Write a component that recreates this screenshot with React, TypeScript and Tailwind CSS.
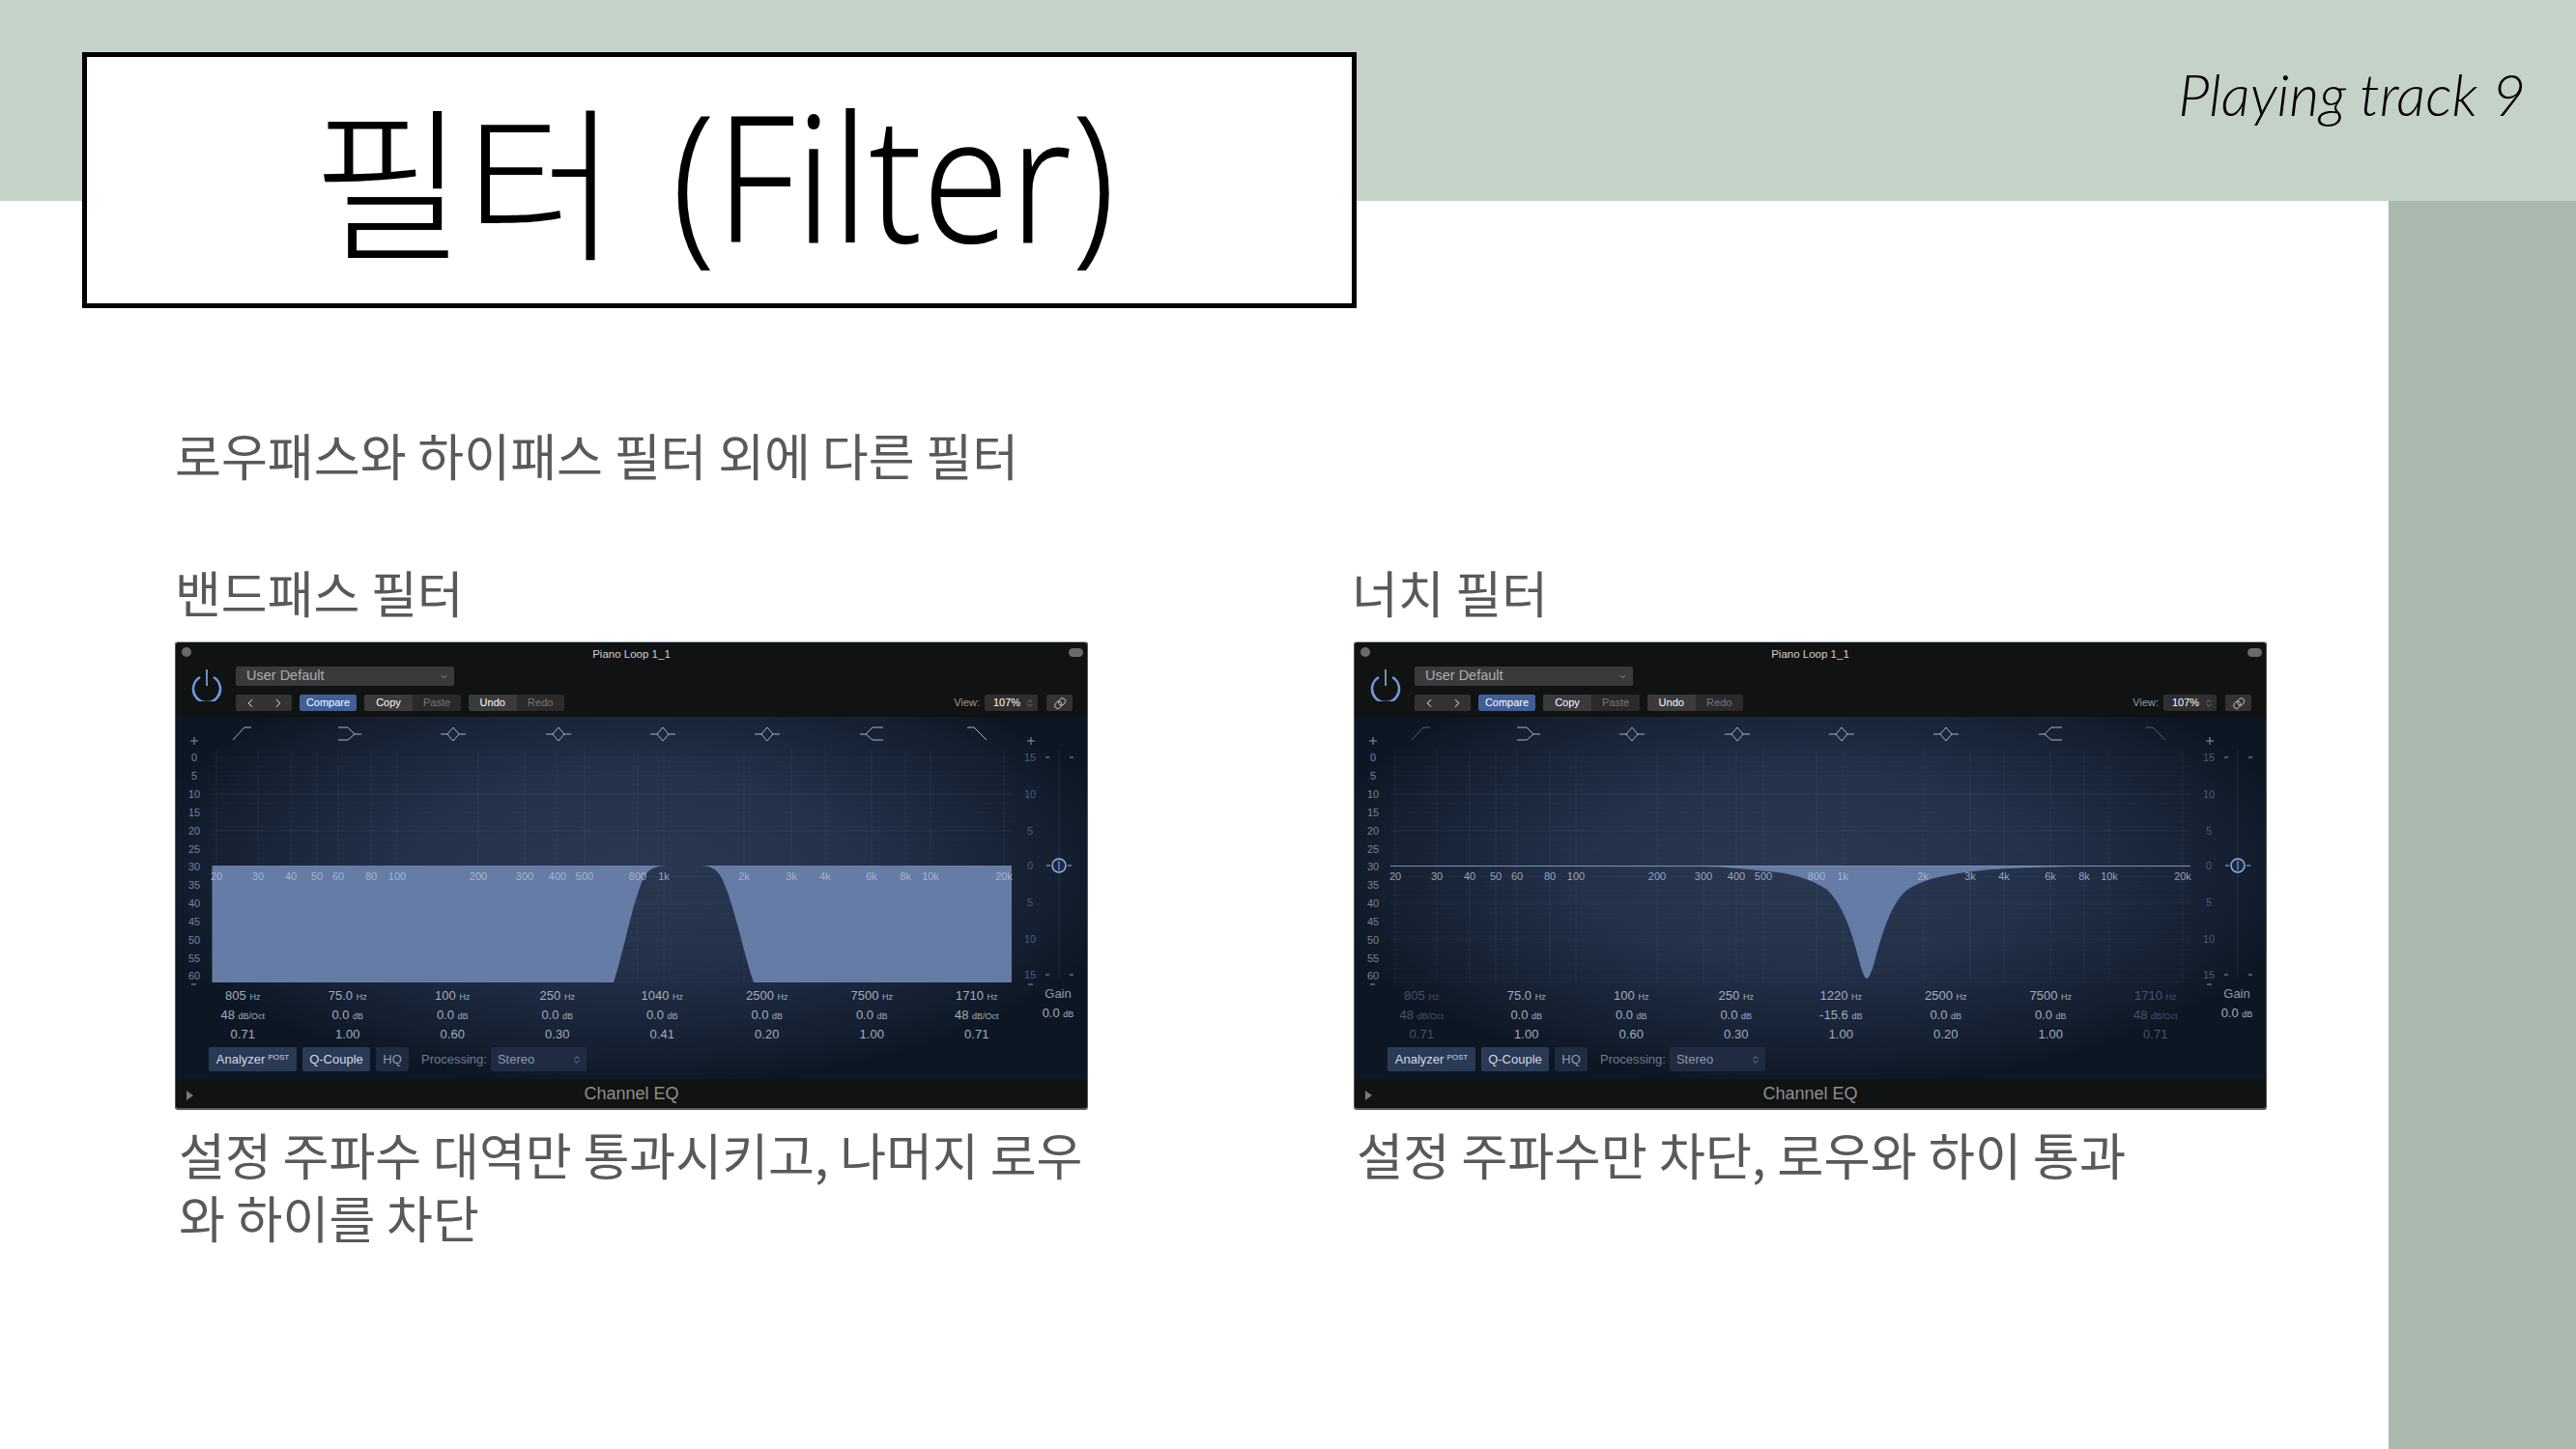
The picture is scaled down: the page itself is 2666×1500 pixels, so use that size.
import { ChevronLeft, ChevronRight, ChevronDown, ChevronsUpDown } from 'lucide-react'

type Band = { freq: string; unit: string; gain: string; gainUnit: string; q: string; dim?: boolean }

const freqLabels: [string, number][] = [
  ['20', 42], ['30', 85], ['40', 119], ['50', 146], ['60', 168], ['80', 202], ['100', 229],
  ['200', 313], ['300', 361], ['400', 395], ['500', 423], ['800', 478], ['1k', 505],
  ['2k', 588], ['3k', 637], ['4k', 672], ['6k', 720], ['8k', 755], ['10k', 781], ['20k', 857],
]
const leftDb: [string, number][] = [
  ['0', 120], ['5', 139], ['10', 158], ['15', 177], ['20', 196], ['25', 215], ['30', 233],
  ['35', 252], ['40', 271], ['45', 290], ['50', 309], ['55', 328], ['60', 346],
]
const rightDb: [string, number][] = [
  ['15', 120], ['10', 158], ['5', 196], ['0', 232], ['5', 270], ['10', 308], ['15', 345],
]
const bellCenters = [287, 396, 504, 612]

const bandPass: Band[] = [
  { freq: '805', unit: 'Hz', gain: '48', gainUnit: 'dB/Oct', q: '0.71' },
  { freq: '75.0', unit: 'Hz', gain: '0.0', gainUnit: 'dB', q: '1.00' },
  { freq: '100', unit: 'Hz', gain: '0.0', gainUnit: 'dB', q: '0.60' },
  { freq: '250', unit: 'Hz', gain: '0.0', gainUnit: 'dB', q: '0.30' },
  { freq: '1040', unit: 'Hz', gain: '0.0', gainUnit: 'dB', q: '0.41' },
  { freq: '2500', unit: 'Hz', gain: '0.0', gainUnit: 'dB', q: '0.20' },
  { freq: '7500', unit: 'Hz', gain: '0.0', gainUnit: 'dB', q: '1.00' },
  { freq: '1710', unit: 'Hz', gain: '48', gainUnit: 'dB/Oct', q: '0.71' },
]

const notch: Band[] = [
  { freq: '805', unit: 'Hz', gain: '48', gainUnit: 'dB/Oct', q: '0.71', dim: true },
  { freq: '75.0', unit: 'Hz', gain: '0.0', gainUnit: 'dB', q: '1.00' },
  { freq: '100', unit: 'Hz', gain: '0.0', gainUnit: 'dB', q: '0.60' },
  { freq: '250', unit: 'Hz', gain: '0.0', gainUnit: 'dB', q: '0.30' },
  { freq: '1220', unit: 'Hz', gain: '-15.6', gainUnit: 'dB', q: '1.00' },
  { freq: '2500', unit: 'Hz', gain: '0.0', gainUnit: 'dB', q: '0.20' },
  { freq: '7500', unit: 'Hz', gain: '0.0', gainUnit: 'dB', q: '1.00' },
  { freq: '1710', unit: 'Hz', gain: '48', gainUnit: 'dB/Oct', q: '0.71', dim: true },
]

const bandPassPath =
  'M37.5 232 H865 V353 H598 C588 325 578 272 565 245 C559 234 552 232 540 232 H512 C498 232 490 234 484 245 C472 272 464 320 453 353 H37.5 Z'
const notchPath =
  'M37.5 232 H865 V233 H739 C700 234 664 235 640 238 C610 242 589 246 572 257 C555 270 545 305 538 332 C535 342 532 349 530 349 C528 349 525 342 522 330 C515 302 505 272 489 257 C470 244 445 239 426 238 C400 235 380 233 360 233 H37.5 Z'

function Chart({ path, dimEnds, line }: { path: string; dimEnds?: boolean; line?: boolean }) {
  const hLines = Array.from({ length: 50 }, (_, i) => 120 + i * 4.75)
  return (
    <svg viewBox="0 78 943 279" className="w-full h-[279px] block font-['Liberation_Sans',sans-serif]">
      {hLines.map(y => (
        <line key={y} x1={37} x2={865} y1={y} y2={y} stroke="#ffffff" strokeOpacity={0.025} />
      ))}
      {freqLabels.map(([label, x]) => (
        <line key={label} x1={x} x2={x} y1={112} y2={353} stroke="#ffffff" strokeOpacity={0.05} />
      ))}
      {[158, 196, 270, 308].map(y => (
        <line key={y} x1={37} x2={865} y1={y} y2={y} stroke="#ffffff" strokeOpacity={0.05} />
      ))}
      <path d={path} fill="#667ca6" />
      {line && <line x1={37} x2={865} y1={232.5} y2={232.5} stroke="#7f90ad" />}
      {freqLabels.map(([label, x]) => (
        <text key={label} x={x} y={247} fontSize={11} textAnchor="middle" fill="#b4bfd0" fillOpacity={0.85}>
          {label}
        </text>
      ))}
      {leftDb.map(([label, y]) => (
        <text key={y} x={19} y={y + 4} fontSize={11} textAnchor="middle" fill="#76849a">
          {label}
        </text>
      ))}
      {rightDb.map(([label, y]) => (
        <text key={y} x={884} y={y + 4} fontSize={11} textAnchor="middle" fill="#4f5d73">
          {label}
        </text>
      ))}
      <g stroke="#8a97ab" fill="none">
        <path d="M15 103 H23 M19 99 V107" />
        <path d="M16 355 H21" />
        <path d="M881 103 H889 M885 99 V107" />
        <path d="M882 355 H887" />
      </g>
      <g fill="none" strokeWidth={1} stroke="#aab4c4">
        <path d="M59 102 L71 89 H78" strokeOpacity={dimEnds ? 0.45 : 1} />
        <path d="M168 89 H178 L185 96 H192 M185 96 L178 102 H168" />
        {bellCenters.map(c => (
          <path key={c} d={`M${c - 13} 96 H${c - 6} L${c} 89 L${c + 6} 96 H${c + 13} M${c - 6} 96 L${c} 103 L${c + 6} 96`} />
        ))}
        <path d="M708 96 H714 L721 89 H732 M714 96 L721 102 H732" />
        <path d="M819 89 H826 L839 102" strokeOpacity={dimEnds ? 0.45 : 1} />
      </g>
      <line x1={914} x2={914} y1={112} y2={350} stroke="#ffffff" strokeOpacity={0.08} />
      <g stroke="#8a97ab">
        <path d="M900 120 H904 M925 120 H929 M900 345 H904 M925 345 H929" />
        <path d="M901 232 H905 M923 232 H927" stroke="#a8b8d0" />
      </g>
      <circle cx={914} cy={232} r={7} fill="#1a2a44" stroke="#8fb2ec" strokeWidth={1.5} />
      <line x1={914} x2={914} y1={227} y2={237} stroke="#8fb2ec" />
    </svg>
  )
}

function ParamCell({ band }: { band: Band }) {
  const tone = band.dim ? 'text-[#46536a]' : 'text-[#a3adbd]'
  return (
    <div className={`flex flex-col items-center ${tone}`}>
      <div className="h-5 leading-5 text-[13px]">
        {band.freq} <span className="text-[9px]">{band.unit}</span>
      </div>
      <div className="h-5 leading-5 text-[13px]">
        {band.gain} <span className="text-[9px]">{band.gainUnit}</span>
      </div>
      <div className="h-5 leading-5 text-[13px]">{band.q}</div>
    </div>
  )
}

function ChannelEq({ path, bands, dimEnds, line }: { path: string; bands: Band[]; dimEnds?: boolean; line?: boolean }) {
  return (
    <div className="w-[945px] h-[485px] flex flex-col overflow-hidden border-x border-[#55585c] border-t border-t-[#9db2d4] border-b-2 border-b-[#55585c] rounded-[3px] font-['Liberation_Sans',sans-serif]">
      <div className="h-[77px] bg-[#111212] shrink-0 flex flex-col">
        <div className="relative h-[25px] flex items-center justify-center text-[11.5px] text-[#d2d2d2]">
          <span className="absolute left-[6px] top-[5px] size-[10px] rounded-full bg-[#6a6a6a]" />
          Piano Loop 1_1
          <span className="absolute right-[4px] top-[6px] w-[15px] h-[9px] rounded-full bg-[#6a6a6a]" />
        </div>
        <div className="flex pl-[16px] pr-[15px]">
          <svg viewBox="0 0 32 34" className="w-[32px] h-[34px] mt-[2px]" fill="none" stroke="#6f9ae0" strokeWidth={2.5}>
            <path d="M9 9 A14 14 0 1 0 23 9" />
            <path d="M16 1 V18" stroke="#8fb0e4" strokeWidth={1.6} />
          </svg>
          <div className="flex-1 ml-[14px] flex flex-col">
            <div className="w-[226px] h-[20px] rounded-[2px] bg-[#3a3a3b] text-[#aeaeae] text-[14.5px] flex items-center justify-between pl-[11px] pr-[6px]">
              User Default
              <ChevronDown size={9} />
            </div>
            <div className="flex items-center h-[17px] mt-[9px] text-[11px] text-[#d8d8d8]">
              <div className="w-[58px] h-full flex rounded-[2px] bg-[#333334] text-white">
                <span className="flex-1 flex items-center justify-center"><ChevronLeft size={14} strokeWidth={1.6} /></span>
                <span className="flex-1 flex items-center justify-center"><ChevronRight size={14} strokeWidth={1.6} /></span>
              </div>
              <div className="ml-[8px] w-[59px] h-full rounded-[2px] bg-[#3f5f99] flex items-center justify-center text-white">Compare</div>
              <div className="ml-[8px] w-[100px] h-full flex rounded-[2px] bg-[#2a2a2b]">
                <span className="w-1/2 bg-[#3a3a3b] rounded-l-[2px] flex items-center justify-center text-white">Copy</span>
                <span className="w-1/2 flex items-center justify-center text-[#777]">Paste</span>
              </div>
              <div className="ml-[8px] w-[99px] h-full flex rounded-[2px] bg-[#2a2a2b]">
                <span className="w-1/2 bg-[#3a3a3b] rounded-l-[2px] flex items-center justify-center text-white">Undo</span>
                <span className="w-1/2 flex items-center justify-center text-[#777]">Redo</span>
              </div>
              <span className="ml-auto text-[#9b9b9b]">View:</span>
              <div className="ml-[5px] w-[55px] h-full rounded-[2px] bg-[#2f2f30] flex items-center justify-between pl-[9px] pr-[3px] text-white">
                107%
                <ChevronsUpDown size={10} className="text-[#888]" />
              </div>
              <div className="ml-[9px] w-[27px] h-full rounded-[2px] bg-[#333334] flex items-center justify-center">
                <svg viewBox="0 0 16 16" className="size-[14px]" fill="none" stroke="#c8c8c8" strokeWidth={1}>
                  <rect x="7" y="1.5" width="7" height="9" rx="3.5" transform="rotate(35 10 6)" />
                  <rect x="2.5" y="5.5" width="7" height="9" rx="3.5" transform="rotate(35 6 10)" />
                </svg>
              </div>
            </div>
          </div>
        </div>
      </div>
      <div className="flex-1 flex flex-col bg-[radial-gradient(ellipse_55%_60%_at_50%_42%,#2a3750_0%,#223049_45%,#141f30_85%,#0d1724_100%)]">
        <Chart path={path} dimEnds={dimEnds} line={line} />
        <div className="flex">
          <div className="ml-[15px] w-[868px] grid grid-cols-8">
            {bands.map((band, i) => (
              <ParamCell key={i} band={band} />
            ))}
          </div>
          <div className="flex-1 flex flex-col items-center text-[#8e9aac] text-[13px] leading-5">
            <div className="h-5 -mt-[2px]">Gain</div>
            <div className="h-5 text-[#a3adbd]">0.0 <span className="text-[9px]">dB</span></div>
          </div>
        </div>
        <div className="flex items-center h-[25px] mt-[3px] ml-[34px] text-[13px] text-[#aeb8c8]">
          <div className="w-[91px] h-full rounded-[2px] bg-[#2b3a54] flex items-center justify-center gap-[3px] text-[#d2d8e2]">
            Analyzer <span className="text-[8px] -mt-[4px]">POST</span>
          </div>
          <div className="ml-[6px] w-[70px] h-full rounded-[2px] bg-[#2b3a54] flex items-center justify-center text-[#d2d8e2]">Q-Couple</div>
          <div className="ml-[6px] w-[34px] h-full rounded-[2px] bg-[#1e2b40] flex items-center justify-center text-[#8e9aac]">HQ</div>
          <span className="ml-[13px] text-[#6d7a8e]">Processing:</span>
          <div className="ml-[4px] w-[99px] h-full rounded-[2px] bg-[#1e2b40] flex items-center justify-between pl-[7px] pr-[5px] text-[#8e9aac]">
            Stereo
            <ChevronsUpDown size={10} />
          </div>
        </div>
      </div>
      <div className="h-[30px] shrink-0 bg-[#111212] relative flex items-center justify-center text-[18px] text-[#8f8f8f]">
        <span className="absolute left-[11px] top-[12px] border-y-[5px] border-y-transparent border-l-[7px] border-l-[#777]" />
        Channel EQ
      </div>
    </div>
  )
}

export default function App() {
  return (
    <div className="w-[2666px] h-[1500px] bg-white overflow-hidden font-['Noto_Sans_CJK_KR','Noto_Sans',sans-serif] text-[#595959]">
      <header className="h-[208px] bg-[#c4d2c8] flex items-start justify-between pl-[85px] pr-[52px]">
        <div className="mt-[54px] w-[1319px] h-[265px] shrink-0 bg-white border-[5px] border-black flex items-center pl-[233px] leading-none text-black font-normal whitespace-nowrap">
          <span className="text-[172px] font-light -mt-[12px]">필터</span>
          <span className="ml-[56px] w-[456px] -mt-[14px] font-['Noto_Sans',sans-serif] font-light text-[182px] inline-block origin-left scale-x-[0.897]">(Filter)</span>
        </div>
        <div className="mt-[67px] text-[60px] leading-none italic font-light text-black font-['Lato',cursive]">
          Playing track 9
        </div>
      </header>
      <div className="flex h-[1292px]">
        <main className="flex-1 pl-[181px] text-[52px]">
          <p className="mt-[226px] h-[74px] leading-[74px] text-[52.1px]">로우패스와 하이패스 필터 외에 다른 필터</p>
          <div className="mt-[68px] grid grid-cols-[1218px_945px]">
            <section>
              <h2 className="h-[74px] leading-[74px] font-normal">밴드패스 필터</h2>
              <div className="mt-[14px]"><ChannelEq path={bandPassPath} bands={bandPass} /></div>
              <p className="mt-[13px] ml-[4px] w-[960px] leading-[65px] text-[52.1px]">
                설정 주파수 대역만 통과시키고, 나머지 로우 와 하이를 차단
              </p>
            </section>
            <section>
              <h2 className="h-[74px] leading-[74px] font-normal">너치 필터</h2>
              <div className="mt-[14px] ml-[2px]"><ChannelEq path={notchPath} bands={notch} dimEnds line /></div>
              <p className="mt-[13px] ml-[5px] leading-[65px] text-[52.4px]">설정 주파수만 차단, 로우와 하이 통과</p>
            </section>
          </div>
        </main>
        <aside className="w-[194px] shrink-0 bg-[#a9b9ae]" />
      </div>
    </div>
  )
}
